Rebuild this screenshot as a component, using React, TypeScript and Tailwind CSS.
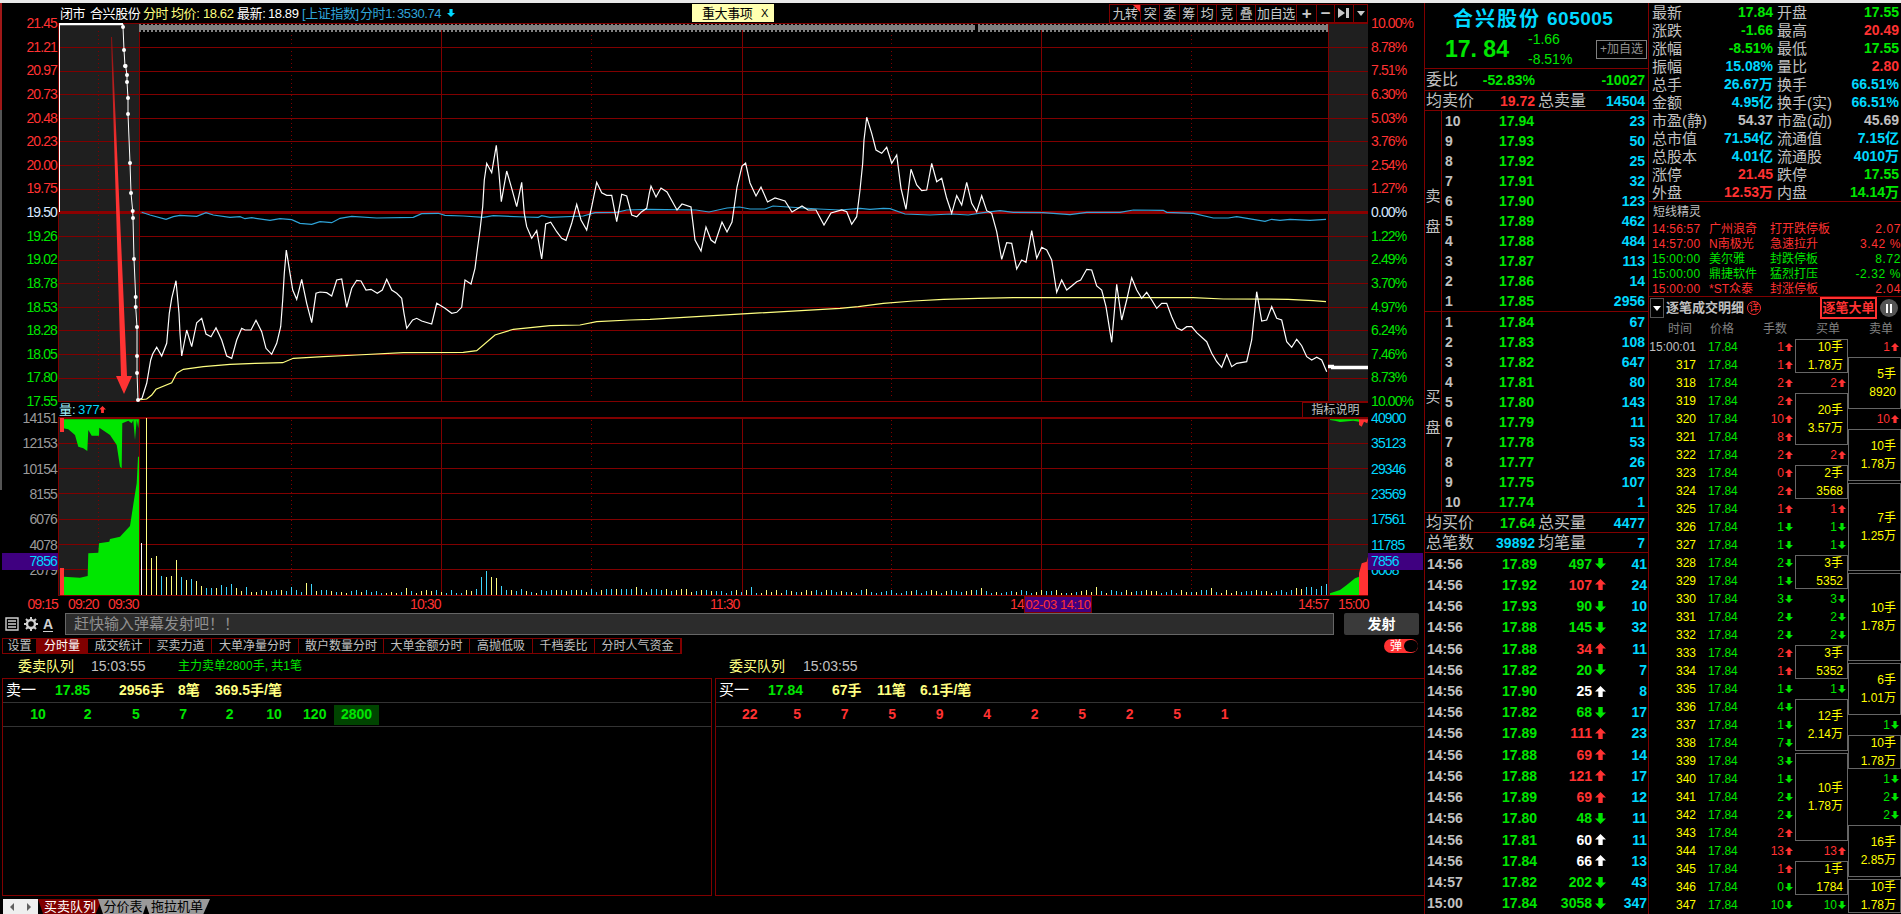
import React from "react";

type Pt = [number, number];
const z11 = (p: Pt[]): Pt[] => p.map(([x, y]) => [130 + x / 3, 100 + y / 3]);
const z12 = (p: Pt[]): Pt[] => p.map(([x, y]) => [840 + x / 3, 100 + y / 3]);
const z6 = (p: Pt[]): Pt[] => p.map(([x, y]) => [x / 3, 390 + y / 3]);
const z9 = (p: Pt[]): Pt[] => p.map(([x, y]) => [1240 + x / 3, 380 + y / 3]);
const str = (p: Pt[]) => p.map(([x, y]) => `${x.toFixed(1)},${y.toFixed(1)}`).join(" ");

const preDots: Pt[] = [
  [123, 27], [124, 50], [125, 66], [125.6, 66], [127, 75], [127, 82], [128, 98], [128, 114], [130, 163], [131, 193],
  [132.7, 211], [133, 218], [134, 259], [135.7, 297], [135.7, 307], [137, 327], [137, 356], [137, 373], [138, 400],
];

const whiteLine: Pt[] = [
  ...z11([
    [24, 900], [36, 895], [50, 850], [62, 780], [68, 762], [80, 742], [95, 768], [110, 730], [118, 640], [125, 595], [138, 542], [147, 640],
    [150, 700], [155, 768], [170, 690], [185, 740], [200, 668], [215, 655], [228, 702], [243, 710], [258, 683], [275, 720], [290, 768],
    [305, 775], [320, 720], [335, 685], [345, 690], [363, 690], [378, 661], [395, 695], [408, 745], [425, 763], [440, 730], [452, 680],
    [458, 600], [463, 520], [469, 450], [480, 520], [488, 570], [500, 598], [515, 538], [530, 610], [545, 668], [558, 580], [570, 576],
    [590, 578], [605, 588], [620, 540], [635, 537], [650, 622], [665, 565], [680, 541], [693, 543], [708, 570], [723, 568], [742, 580],
    [757, 570], [770, 538], [785, 570], [800, 580], [815, 595], [822, 640], [830, 685], [848, 660], [860, 655], [875, 663], [905, 672],
    [920, 610], [945, 625], [965, 640], [980, 637], [995, 622], [1005, 540], [1023, 552], [1035, 505], [1042, 450], [1050, 390], [1058, 320],
    [1063, 240], [1070, 190], [1085, 218], [1099, 136], [1107, 220], [1114, 305], [1130, 213], [1145, 265], [1160, 320], [1175, 247],
    [1183, 340], [1190, 380], [1205, 415], [1220, 392], [1235, 477], [1247, 372], [1262, 367], [1280, 395], [1295, 415], [1308, 421],
    [1325, 370], [1340, 313], [1353, 360], [1370, 390], [1385, 320], [1400, 247], [1415, 278], [1430, 286], [1445, 286], [1460, 365],
    [1475, 283], [1490, 288], [1505, 345], [1520, 350], [1535, 335], [1550, 325], [1558, 280],
  ]),
  [651, 186], [656, 197], [661, 188], [667, 192], [677, 210], [682, 204], [691, 207], [695, 240], [701, 251], [706, 227], [711, 240], [715, 243],
  [722, 222], [727, 232], [732, 222], [737, 187], [742, 166], [745.6, 163], [750, 183], [756, 196], [761, 187], [767.5, 202], [775, 198],
  [785, 201], [792, 212], [802, 206], [808, 210], [816, 210], [824, 225], [831, 213],
  ...z12([
    [5, 330], [20, 335], [35, 373], [50, 350], [60, 270], [68, 190], [72, 120], [80, 52], [95, 100], [108, 150], [125, 160], [140, 142],
    [155, 190], [170, 165], [183, 265], [198, 328], [213, 208], [230, 255], [245, 272], [260, 270], [275, 190], [290, 245], [305, 235],
    [320, 295], [335, 340], [350, 287], [365, 315], [380, 247], [395, 310], [410, 335], [425, 287], [440, 332], [455, 340], [470, 395],
    [485, 478], [500, 428], [515, 430], [530, 507], [545, 480], [558, 487], [575, 392], [590, 475], [605, 442], [620, 450], [635, 480],
    [650, 577], [665, 540], [680, 570], [695, 558], [710, 545], [722, 540], [740, 508], [755, 510], [770, 558], [785, 570], [798, 620],
    [815, 727], [830, 553], [845, 660], [860, 600], [875, 533], [890, 570], [905, 595], [920, 577], [935, 600], [950, 625], [965, 610],
    [980, 610], [995, 650], [1010, 683], [1025, 691], [1040, 680], [1055, 680], [1070, 698], [1100, 725], [1115, 760], [1130, 785],
    [1145, 802], [1160, 763], [1175, 800], [1190, 790], [1220, 785], [1235, 720], [1250, 575], [1265, 663], [1280, 660], [1295, 620],
    [1310, 655], [1325, 660], [1340, 725], [1355, 742], [1370, 718], [1385, 737], [1400, 770], [1415, 780], [1430, 772], [1445, 780], [1460, 815],
  ]),
];

const avgLine: Pt[] = [
  ...z11([
    [24, 900], [50, 897], [65, 885], [78, 868], [125, 848], [140, 820], [160, 808], [220, 800], [300, 793], [375, 790], [458, 788], [490, 775],
    [580, 770], [680, 765], [820, 758], [1000, 757], [1040, 752], [1095, 705], [1150, 688], [1260, 677], [1350, 675], [1400, 665], [1500, 660], [1560, 658],
  ]),
  ...z12([
    [0, 625], [55, 620], [130, 610], [220, 603], [310, 598], [415, 595], [520, 593], [1060, 593], [1150, 597], [1345, 598], [1420, 602], [1458, 605],
  ]),
];

const indexLine: Pt[] = [
  ...z11([
    [35, 337], [60, 345], [108, 358], [130, 350], [150, 346], [200, 349], [228, 338], [250, 345], [300, 352], [330, 350], [345, 356], [365, 353],
    [420, 361], [450, 356], [485, 359], [510, 370], [545, 373], [570, 365], [605, 368], [630, 355], [665, 349], [740, 354], [850, 352], [875, 341],
    [925, 340], [945, 346], [1000, 348], [1060, 352], [1090, 347], [1185, 351], [1225, 352], [1235, 347], [1260, 352], [1360, 348], [1395, 338],
    [1460, 337], [1490, 330], [1560, 328],
  ]),
  [696, 210], [709, 212], [727, 208], [739.5, 207], [750, 209], [765, 209], [773, 206], [788, 207], [818.6, 209],
  ...z12([
    [0, 330], [60, 325], [90, 328], [130, 325], [150, 326], [195, 342], [270, 345], [335, 342], [385, 345], [430, 338], [480, 332], [520, 337],
    [610, 338], [690, 344], [740, 337], [840, 337], [880, 330], [970, 331], [980, 337], [1060, 340], [1120, 354], [1165, 354], [1190, 350],
    [1275, 364], [1295, 358], [1320, 361], [1350, 358], [1410, 361], [1458, 358],
  ]),
];

const priceGrid = Array.from({ length: 17 }, (_, i) => Math.round(23.3 + 23.63 * i) + 0.5);
const volGrid = [418.5, 443.5, 468.5, 493.5, 519.5, 544.5, 569.5, 595.5];
const solidV = [139.5, 441.5, 742.5, 1041.5];
const dottedV = [98.5, 291.5, 591.5, 891.5, 1191.5];

const firstBars: [number, string][] = [
  [52, "w"], [177, "y"], [37, "y"], [39, "y"], [19, "c"], [18, "y"], [19, "y"], [35, "y"], [18, "c"], [15, "y"], [16, "c"], [14, "y"], [9, "y"],
  [7, "c"], [7, "c"], [7, "y"], [10, "c"], [8, "c"], [11, "c"], [7, "y"], [4, "y"], [8, "c"], [3, "y"], [3, "y"], [5, "c"],
];
const spikes: Record<number, number> = { 33: 12, 34: 11, 65: 5, 67: 6, 68: 18, 69: 24, 70: 18, 71: 17, 72: 9 };
const bars = Array.from({ length: 238 }, (_, i) => {
  if (i < firstBars.length) return { h: firstBars[i][0], k: firstBars[i][1] };
  const r = Math.abs(Math.sin(i * 12.9898) * 43758.5453) % 1;
  const r2 = Math.abs(Math.sin(i * 78.233) * 12543.123) % 1;
  let h = 2 + r * 3.5;
  if (i > 85 && i < 110) h += 1;
  if (i > 230) h = 4 + r * 6;
  if (i % 23 === 7) h += 3;
  return { h: spikes[i] ?? h, k: r2 > 0.45 ? "c" : "y" };
});
const barColor: Record<string, string> = { w: "#ffffff", y: "#ffff80", c: "#40d8ff" };

const red = "text-[#ff3232]";
const green = "text-[#00e600]";
const cyan = "text-[#00d8ff]";
const gray = "text-[#c0c0c0]";
const yellow = "text-[#ffff00]";

const priceLabels: [string, string][] = [
  ["21.45", red], ["21.21", red], ["20.97", red], ["20.73", red], ["20.48", red], ["20.23", red], ["20.00", red], ["19.75", red], ["19.50", "text-[#d8e8ff]"],
  ["19.26", green], ["19.02", green], ["18.78", green], ["18.53", green], ["18.28", green], ["18.05", green], ["17.80", green], ["17.55", green],
];
const pctLabels: [string, string][] = [
  ["10.00%", red], ["8.78%", red], ["7.51%", red], ["6.30%", red], ["5.03%", red], ["3.76%", red], ["2.54%", red], ["1.27%", red], ["0.00%", "text-[#d8e8ff]"],
  ["1.22%", green], ["2.49%", green], ["3.70%", green], ["4.97%", green], ["6.24%", green], ["7.46%", green], ["8.73%", green], ["10.00%", green],
];

const tools = [
  { t: "九转", w: "w-[31px]", flag: true },
  { t: "突", w: "w-[19px]" },
  { t: "委", w: "w-[20px]" },
  { t: "筹", w: "w-[18px]" },
  { t: "均", w: "w-[19px]" },
  { t: "竞", w: "w-[20px]" },
  { t: "叠", w: "w-[19px]" },
  { t: "加自选", w: "w-[41px]" },
];

const subTabs = [
  { t: "设置", w: "w-[34px]" },
  { t: "分时量", w: "w-[51px]", on: true },
  { t: "成交统计", w: "w-[62px]" },
  { t: "买卖力道", w: "w-[62px]" },
  { t: "大单净量分时", w: "w-[87px]" },
  { t: "散户数量分时", w: "w-[85px]" },
  { t: "大单金额分时", w: "w-[86px]" },
  { t: "高抛低吸", w: "w-[63px]" },
  { t: "千档委比", w: "w-[62px]" },
  { t: "分时人气资金", w: "w-[86px]" },
];

const sellBook = [
  ["10", "17.94", "23"], ["9", "17.93", "50"], ["8", "17.92", "25"], ["7", "17.91", "32"], ["6", "17.90", "123"],
  ["5", "17.89", "462"], ["4", "17.88", "484"], ["3", "17.87", "113"], ["2", "17.86", "14"], ["1", "17.85", "2956"],
];
const buyBook = [
  ["1", "17.84", "67"], ["2", "17.83", "108"], ["3", "17.82", "647"], ["4", "17.81", "80"], ["5", "17.80", "143"],
  ["6", "17.79", "11"], ["7", "17.78", "53"], ["8", "17.77", "26"], ["9", "17.75", "107"], ["10", "17.74", "1"],
];

const ticks: [string, string, string, string, string][] = [
  ["14:56", "17.89", "497", "d", "41"], ["14:56", "17.92", "107", "u", "24"], ["14:56", "17.93", "90", "d", "10"], ["14:56", "17.88", "145", "d", "32"],
  ["14:56", "17.88", "34", "u", "11"], ["14:56", "17.82", "20", "d", "7"], ["14:56", "17.90", "25", "w", "8"], ["14:56", "17.82", "68", "d", "17"],
  ["14:56", "17.89", "111", "u", "23"], ["14:56", "17.88", "69", "u", "14"], ["14:56", "17.88", "121", "u", "17"], ["14:56", "17.89", "69", "u", "12"],
  ["14:56", "17.80", "48", "d", "11"], ["14:56", "17.81", "60", "w", "11"], ["14:56", "17.84", "66", "w", "13"], ["14:57", "17.82", "202", "d", "43"],
  ["15:00", "17.84", "3058", "d", "347"],
];

const quotes: [string, string, string, string, string, string][] = [
  ["最新", "17.84", green, "开盘", "17.55", green],
  ["涨跌", "-1.66", green, "最高", "20.49", red],
  ["涨幅", "-8.51%", green, "最低", "17.55", green],
  ["振幅", "15.08%", cyan, "量比", "2.80", red],
  ["总手", "26.67万", cyan, "换手", "66.51%", cyan],
  ["金额", "4.95亿", cyan, "换手(实)", "66.51%", cyan],
  ["市盈(静)", "54.37", gray, "市盈(动)", "45.69", gray],
  ["总市值", "71.54亿", cyan, "流通值", "7.15亿", cyan],
  ["总股本", "4.01亿", cyan, "流通股", "4010万", cyan],
  ["涨停", "21.45", red, "跌停", "17.55", green],
  ["外盘", "12.53万", red, "内盘", "14.14万", green],
];

const alerts: [string, string, string, string, string][] = [
  ["14:56:57", "广州浪奇", "打开跌停板", "2.07", red],
  ["14:57:00", "N南极光", "急速拉升", "3.42 %", red],
  ["15:00:00", "美尔雅", "封跌停板", "8.72", green],
  ["15:00:00", "鼎捷软件", "猛烈打压", "-2.32 %", green],
  ["15:00:00", "*ST众泰", "封涨停板", "2.04", red],
];

const hands: [number, string][] = [
  [1, "u"], [1, "u"], [2, "u"], [2, "u"], [10, "u"], [8, "u"], [2, "u"], [0, "u"], [2, "u"], [1, "u"], [1, "d"], [1, "d"], [2, "d"], [1, "d"], [3, "d"], [2, "d"],
  [2, "d"], [2, "u"], [1, "u"], [1, "d"], [4, "d"], [1, "d"], [7, "d"], [3, "d"], [1, "d"], [2, "d"], [2, "d"], [2, "u"], [13, "u"], [1, "u"], [0, "d"], [10, "d"],
];

type Block = { n: number; a?: string; b?: string; v?: number; d?: string };
const buyBlocks: Block[] = [
  { n: 2, a: "10手", b: "1.78万" }, { n: 1, v: 2, d: "u" }, { n: 3, a: "20手", b: "3.57万" }, { n: 1, v: 2, d: "u" }, { n: 2, a: "2手", b: "3568" },
  { n: 1, v: 1, d: "u" }, { n: 1, v: 1, d: "d" }, { n: 1, v: 1, d: "d" }, { n: 2, a: "3手", b: "5352" }, { n: 1, v: 3, d: "d" }, { n: 1, v: 2, d: "d" },
  { n: 1, v: 2, d: "d" }, { n: 2, a: "3手", b: "5352" }, { n: 1, v: 1, d: "d" }, { n: 3, a: "12手", b: "2.14万" }, { n: 5, a: "10手", b: "1.78万" },
  { n: 1, v: 13, d: "u" }, { n: 2, a: "1手", b: "1784" }, { n: 1, v: 10, d: "d" },
];
const sellBlocks: Block[] = [
  { n: 1, v: 1, d: "u" }, { n: 3, a: "5手", b: "8920" }, { n: 1, v: 10, d: "u" }, { n: 3, a: "10手", b: "1.78万" }, { n: 5, a: "7手", b: "1.25万" },
  { n: 5, a: "10手", b: "1.78万" }, { n: 3, a: "6手", b: "1.01万" }, { n: 1, v: 1, d: "d" }, { n: 2, a: "10手", b: "1.78万" }, { n: 1, v: 1, d: "d" },
  { n: 1, v: 2, d: "d" }, { n: 1, v: 2, d: "d" }, { n: 3, a: "16手", b: "2.85万" }, { n: 2, a: "10手", b: "1.78万" },
];

const sellCellW = ["w-[50px]", "w-[49.5px]", "w-[47px]", "w-[47.5px]", "w-[45.5px]", "w-[43px]", "w-[38.5px]", "w-[45px]"];

const Arrow = ({ d, className }: { d: string; className: string }) => (
  <svg viewBox="0 0 10 10" className={className}>
    <polygon className="fill-current" points={d === "d" ? "3,0 7,0 7,5 10,5 5,10 0,5 3,5" : "5,0 10,5 7,5 7,10 3,10 3,5 0,5"} />
  </svg>
);

const handColor = (d: string) => (d === "u" ? red : green);

const BlockCol = ({ blocks }: { blocks: Block[] }) => (
  <div className="flex w-[53px] flex-col">
    {blocks.map((b, i) =>
      b.a ? (
        <div key={i} className="py-[1px]" style={{ height: b.n * 18 }}>
          <div className={`flex h-full flex-col items-end justify-center border border-[#666666] pr-[4px] text-[12px] leading-[18px] ${yellow}`}>
            <span>{b.a}</span>
            <span>{b.b}</span>
          </div>
        </div>
      ) : (
        <div key={i} className={`flex h-[18px] items-center justify-end pr-[2px] text-[12px] ${handColor(b.d as string)}`}>
          <span>{b.v}</span>
          <Arrow d={b.d as string} className="ml-[1px] h-[8px] w-[8px]" />
        </div>
      ),
    )}
  </div>
);

const PriceChart = () => (
  <svg viewBox="58 23 1310 379" className="block h-[379px] w-[1310px]">
    <rect x="59" y="23" width="80" height="378" fill="#1f1f1f" />
    <rect x="1328" y="23" width="40" height="378" fill="#1f1f1f" />
    {priceGrid.map((y) => (
      <line key={y} x1="58" x2="1368" y1={y} y2={y} stroke="#800000" shapeRendering="crispEdges" />
    ))}
    <line x1="58" x2="1368" y1="212.5" y2="212.5" stroke="#8b0000" strokeWidth="3" shapeRendering="crispEdges" />
    {solidV.map((x) => (
      <line key={x} x1={x} x2={x} y1="23" y2="401" stroke="#800000" shapeRendering="crispEdges" />
    ))}
    <line x1="1328.5" x2="1328.5" y1="23" y2="401" stroke="#800000" shapeRendering="crispEdges" />
    <line x1="58.5" x2="58.5" y1="23" y2="401" stroke="#800000" shapeRendering="crispEdges" />
    {dottedV.map((x) => (
      <line key={x} x1={x} x2={x} y1="31" y2="399" stroke="#800000" strokeDasharray="1 3" shapeRendering="crispEdges" />
    ))}
    <g shapeRendering="crispEdges">
      <line x1="139" x2="975" y1="27.5" y2="27.5" stroke="#808080" strokeWidth="5" />
      <line x1="139" x2="975" y1="27.5" y2="27.5" stroke="#808080" strokeWidth="8" strokeDasharray="2 2" />
      <line x1="978" x2="1328" y1="27.5" y2="27.5" stroke="#808080" strokeWidth="5" />
      <line x1="978" x2="1328" y1="27.5" y2="27.5" stroke="#808080" strokeWidth="8" strokeDasharray="2 2" />
    </g>
    <polyline points={str(indexLine)} fill="none" stroke="#2fa4d8" strokeWidth="1.2" />
    <polyline points={str(avgLine)} fill="none" stroke="#ffff80" strokeWidth="1.2" />
    <polyline points={str(whiteLine)} fill="none" stroke="#ffffff" strokeWidth="1.2" />
    <polyline points={`59.5,212 59.5,24 123,24 ${str(preDots)}`} fill="none" stroke="#ffffff" strokeWidth="1" />
    <line x1="59" x2="123" y1="24" y2="24" stroke="#ffffff" strokeWidth="2.5" />
    {preDots.map(([x, y], i) => (
      <circle key={i} cx={x} cy={y} r="2" fill="#ffffff" />
    ))}
    <line x1="1331" x2="1368" y1="367.5" y2="367.5" stroke="#ffffff" strokeWidth="3.5" />
    <line x1="1328" x2="1334" y1="366.5" y2="366.5" stroke="#ffffff" strokeWidth="3.5" />
    <defs>
      <linearGradient id="drop" x1="0" x2="0" y1="0" y2="1">
        <stop offset="0" stopColor="#8a1010" />
        <stop offset="0.35" stopColor="#ff3333" />
        <stop offset="1" stopColor="#ff3333" />
      </linearGradient>
    </defs>
    <polygon points="111,37 112,37 127,376 132,376 124,394 116,376 121,376" fill="url(#drop)" />
  </svg>
);

const VolumeChart = () => (
  <svg viewBox="58 418 1310 178" className="block h-[178px] w-[1310px]">
    <rect x="59" y="418" width="80" height="178" fill="#1f1f1f" />
    <rect x="1328" y="418" width="40" height="178" fill="#1f1f1f" />
    {volGrid.map((y) => (
      <line key={y} x1="58" x2="1368" y1={y} y2={y} stroke="#800000" shapeRendering="crispEdges" />
    ))}
    {[...solidV, 58.5, 1328.5].map((x) => (
      <line key={x} x1={x} x2={x} y1="418" y2="596" stroke="#800000" shapeRendering="crispEdges" />
    ))}
    {dottedV.map((x) => (
      <line key={x} x1={x} x2={x} y1="420" y2="595" stroke="#800000" strokeDasharray="1 3" shapeRendering="crispEdges" />
    ))}
    <polygon
      fill="#00e600"
      points={str(z6([[190, 88], [417, 88], [415, 115], [410, 90], [405, 150], [400, 90], [395, 100], [385, 92], [367, 100], [365, 235], [360, 230], [350, 165], [330, 135], [298, 113], [297, 137], [275, 137], [265, 120], [262, 183], [250, 175], [235, 170], [225, 135], [205, 118], [190, 115]]))}
    />
    <polygon
      fill="#00e600"
      points={str(z6([[190, 560], [240, 563], [263, 558], [265, 490], [295, 488], [297, 460], [328, 455], [330, 447], [360, 440], [390, 408], [395, 375], [402, 330], [410, 280], [414, 200], [417, 200], [417, 615], [190, 615]]))}
    />
    <rect x="60" y="418" width="4" height="14" fill="#ff3232" />
    <rect x="60" y="568" width="4" height="27" fill="#ff3232" />
    {bars.map((b, i) => (
      <rect key={i} x={141 + 5 * i} y={595 - b.h} width="1" height={b.h} fill={barColor[b.k]} shapeRendering="crispEdges" />
    ))}
    <polygon fill="#00e600" points={str(z9([[270, 118], [357, 118], [357, 125], [340, 122], [300, 126], [285, 122], [270, 120]]))} />
    <polygon fill="#ff3232" points={str(z9([[357, 118], [385, 118], [382, 130], [372, 125], [365, 140], [357, 135]]))} />
    <polygon fill="#00e600" points={str(z9([[270, 645], [270, 640], [300, 630], [320, 615], [345, 595], [357, 590], [357, 645]]))} />
    <polygon fill="#ff3232" points={str(z9([[357, 580], [365, 550], [380, 545], [383, 530], [385, 645], [357, 645]]))} />
  </svg>
);

const Queue = ({ head, price, summary, nums, numCls, hi, widths }: { head: string; price: string; summary: React.ReactNode; nums: string[]; numCls: string; hi?: boolean; widths?: string[] }) => (
  <div className="flex h-full flex-col">
    <div className="h-[24px] border-b border-[#333333] text-[14px] text-[#ffff80]">
      <div className="flex h-full items-center font-bold">
        <span className="w-[52px] pl-[3px] text-[15px] font-normal text-white">{head}</span>
        <span className={`w-[64px] ${green}`}>{price}</span>
        {summary}
      </div>
    </div>
    <div className="flex h-[24px] items-center border-b border-[#333333] pl-[10px] text-[14px] font-bold">
      {nums.map((n, i) => (
        <span
          key={i}
          className={`flex justify-center ${widths ? widths[i] : "w-[47.5px]"} ${numCls} ${hi && i === nums.length - 1 ? "h-[20px] items-center bg-[#004400]" : ""}`}
        >
          {n}
        </span>
      ))}
    </div>
  </div>
);

export default function App() {
  return (
    <div className="flex h-[914px] w-[1901px] flex-col overflow-hidden bg-black [font-family:'Liberation_Sans','Noto_Sans_CJK_SC',sans-serif]">
      <div className="h-[3px] bg-[#e8e8e8]" />
      <div className="flex h-[911px]">
        {/* left: chart and queues */}
        <div className="flex w-[1424px] flex-col">
          <div className="flex h-[609px]">
            <div className="flex w-[58px]">
              <div className="flex w-[2px] flex-col">
                <div className="h-[107px] bg-[#a01818]" />
                <div className="h-[380px] bg-[#555555]" />
              </div>
              <div className="flex w-[56px] flex-col pt-[12px] text-right text-[14px] leading-[16px] tracking-[-0.9px]">
                <div className="flex h-[394px] flex-col justify-between pr-[1px]">
                  {priceLabels.map(([t, c]) => (
                    <span key={t} className={c}>{t}</span>
                  ))}
                </div>
                <div className="relative mt-[1px] flex h-[168px] flex-col justify-between pr-[1px] text-[#9a9a9a]">
                  {["14151", "12153", "10154", "8155", "6076", "4078", "2079"].map((t) => (
                    <span key={t}>{t}</span>
                  ))}
                  <div className={`absolute top-[143px] right-0 left-0 h-[17px] bg-[#3f0080] pr-[1px] ${cyan}`}>7856</div>
                </div>
                <div className={`mt-[18px] ${red}`}>09:15</div>
              </div>
            </div>
            <div className="flex w-[1310px] flex-col">
              <div className="flex h-[20px] items-center text-[13px] leading-none tracking-[-0.4px] text-[#ffff80]">
                <div className="flex w-[634px] items-center whitespace-nowrap pl-[2px]">
                  <span className="w-[30px] text-white">闭市</span>
                  <span className="w-[53px] text-white">合兴股份</span>
                  <span className="w-[28px]">分时</span>
                  <span className="w-[32px]">均价:</span>
                  <span className="w-[34px]">18.62</span>
                  <span className="w-[31px] text-white">最新:</span>
                  <span className="w-[34px] text-white">18.89</span>
                  <span className="w-[58px] text-[#2fa4d8]">[上证指数]</span>
                  <span className="w-[37px] text-[#2fa4d8]">分时1:</span>
                  <span className="w-[50px] text-[#2fa4d8]">3530.74</span>
                  <Arrow d="d" className={`h-[12px] w-[8px] ${cyan}`} />
                </div>
                <div className="flex h-[18px] w-[82px] items-center justify-between bg-[#ffffb0] pr-[6px] pl-[10px] text-black">
                  <span>重大事项</span>
                  <span className="text-[11px]">X</span>
                </div>
                <div className="w-[335px]" />
                <div className="flex h-[19px] w-[259px] border border-[#800000] text-[#c8c8c8]">
                  {tools.map((b) => (
                    <div key={b.t} className={`relative flex items-center justify-center border-r border-[#800000] ${b.w}`}>
                      {b.t}
                      {b.flag && <span className="absolute top-0 right-0 border-t-[7px] border-l-[7px] border-t-[#ff3232] border-l-transparent" />}
                    </div>
                  ))}
                  <div className="flex w-[20px] items-center justify-center border-r border-[#800000] text-[17px] font-bold">+</div>
                  <div className="flex w-[18px] items-center justify-center border-r border-[#800000] text-[17px] font-bold">−</div>
                  <div className="flex w-[19px] items-center justify-center border-r border-[#800000]">
                    <svg viewBox="0 0 12 12" className="h-[12px] w-[12px]"><path d="M0 1 L7 6 L0 11 Z M8 1 H11 V11 H8 Z" fill="#c8c8c8" /></svg>
                  </div>
                  <div className="flex flex-1 items-center justify-center">
                    <span className="border-x-[4px] border-t-[5px] border-x-transparent border-t-[#c8c8c8]" />
                  </div>
                </div>
              </div>
              <PriceChart />
              <div className="flex h-[16px] items-center justify-between border-b border-[#800000] text-[13px]">
                <div className={`flex items-center pl-[1px] ${cyan}`}>
                  <span className="w-[18px] text-[#a0f0ff]">量:</span>
                  <span className="ml-[1px] w-[21px]">377</span>
                  <Arrow d="u" className={`h-[13px] w-[7px] ${red}`} />
                </div>
                <div className="flex h-[15px] w-[66px] items-center justify-center border-t border-l border-[#800000] text-[12px] text-[#c0c0c0]">指标说明</div>
              </div>
              <VolumeChart />
              <div className={`relative flex h-[16px] items-center text-[14px] leading-none tracking-[-0.9px] whitespace-nowrap ${red}`}>
                <span className="ml-[10px] w-[30px]">09:20</span>
                <span className="ml-[10px] w-[30px]">09:30</span>
                <span className="ml-[272px] w-[30px]">10:30</span>
                <span className="ml-[270px] w-[30px]">11:30</span>
                <span className="ml-[270px] w-[14px]">14</span>
                <span className="ml-[274px] w-[30px]">14:57</span>
                <span className="ml-[10px] w-[30px]">15:00</span>
                <div className="absolute top-0 left-[966px] flex h-[17px] w-[68px] items-center justify-center border border-[#800000] bg-[#3f0080] text-[13px] tracking-[-0.4px]">02-03 14:10</div>
              </div>
            </div>
            <div className="flex w-[56px] flex-col pt-[12px] pl-[3px] text-[14px] leading-[16px] tracking-[-0.9px]">
              <div className="flex h-[394px] flex-col justify-between">
                {pctLabels.map(([t, c], i) => (
                  <span key={i} className={c}>{t}</span>
                ))}
              </div>
              <div className={`relative mt-[1px] flex h-[168px] flex-col justify-between ${cyan}`}>
                {["40900", "35123", "29346", "23569", "17561", "11785", "6008"].map((t) => (
                  <span key={t}>{t}</span>
                ))}
                <div className="absolute top-[143px] right-[1px] left-[-3px] h-[17px] bg-[#3f0080] pl-[3px]">7856</div>
              </div>
            </div>
          </div>

          <div className="mt-[1px] flex h-[22px] items-center">
            <div className="flex w-[65px] items-center gap-[5px] pl-[5px] text-white">
              <svg viewBox="0 0 14 14" className="h-[14px] w-[14px]"><path d="M1 1h12v12H1z M3 4h8M3 7h8M3 10h8" fill="none" stroke="#d0d0d0" strokeWidth="1.4" /></svg>
              <svg viewBox="0 0 14 14" className="h-[14px] w-[14px]">
                <circle cx="7" cy="7" r="4" fill="none" stroke="#d0d0d0" strokeWidth="2.4" />
                <path d="M7 0v3M7 11v3M0 7h3M11 7h3M2 2l2 2M10 10l2 2M12 2l-2 2M4 10l-2 2" stroke="#d0d0d0" strokeWidth="2" />
              </svg>
              <span className="border-b border-[#d0d0d0] text-[14px] leading-[14px] font-bold text-[#d0d0d0]">A</span>
            </div>
            <div className="flex h-[22px] w-[1269px] items-center border border-[#666666] bg-[#2c2c2c] pl-[8px] text-[15px] text-[#909090]">赶快输入弹幕发射吧！！</div>
            <div className="ml-[10px] flex h-[22px] w-[75px] items-center justify-center rounded-[2px] bg-[#3a3a3a] text-[14px] font-bold text-white">发射</div>
          </div>

          <div className="mt-[3px] flex h-[16px] items-center justify-between pr-[6px] pl-[2px]">
            <div className="flex h-[16px] border border-[#800000] text-[12px] leading-none text-[#c0c0c0]">
              {subTabs.map((s) => (
                <div key={s.t} className={`flex items-center justify-center border-r border-[#800000] ${s.w} ${s.on ? "bg-[#800000] text-white" : ""}`}>
                  {s.t}
                </div>
              ))}
            </div>
            <div className="flex h-[14px] w-[34px] items-center justify-between rounded-full bg-[#ff3232] pl-[6px] text-[12px] leading-none text-white">
              弹
              <span className="h-[12px] w-[14px] rounded-full bg-black" />
            </div>
          </div>

          <div className="flex h-[24px] items-center text-[#ffff80]">
            <span className="ml-[18px] w-[73px] text-[14px]">委卖队列</span>
            <span className="w-[87px] text-[14px] text-[#c0c0c0]">15:03:55</span>
            <span className={`w-[551px] text-[12px] ${green}`}>主力卖单2800手, 共1笔</span>
            <span className="w-[74px] text-[14px]">委买队列</span>
            <span className="text-[14px] text-[#c0c0c0]">15:03:55</span>
          </div>

          <div className="ml-[2px] flex h-[218px] gap-[3px]">
            <div className="w-[710px] border border-[#800000]">
              <Queue
                head="卖一"
                price="17.85"
                hi
                widths={sellCellW}
                numCls={green}
                nums={["10", "2", "5", "7", "2", "10", "120", "2800"]}
                summary={
                  <>
                    <span className="w-[59px]">2956手</span>
                    <span className="w-[37px]">8笔</span>
                    <span>369.5手/笔</span>
                  </>
                }
              />
            </div>
            <div className="w-[709px] border border-r-0 border-[#800000]">
              <Queue
                head="买一"
                price="17.84"
                numCls={red}
                nums={["22", "5", "7", "5", "9", "4", "2", "5", "2", "5", "1"]}
                summary={
                  <>
                    <span className="w-[45px]">67手</span>
                    <span className="w-[43px]">11笔</span>
                    <span>6.1手/笔</span>
                  </>
                }
              />
            </div>
          </div>

          <div className="mt-[3px] ml-[3px] flex h-[15px] items-center text-[13px] leading-none">
            <div className="flex h-full w-[35px] items-center justify-around bg-[#efefef] text-[#606060]">
              <span className="border-y-[4px] border-r-[4px] border-y-transparent border-r-[#606060]" />
              <span className="border-y-[4px] border-l-[4px] border-y-transparent border-l-[#606060]" />
            </div>
            <div className="flex h-full w-[64px] items-center justify-center bg-[#800000] text-white [clip-path:polygon(0_0,100%_0,90%_100%,8%_100%)]">买卖队列</div>
            <div className="-ml-[4px] flex h-full w-[50px] items-center justify-center bg-[#999999] text-black [clip-path:polygon(0_0,100%_0,90%_100%,10%_100%)]">分价表</div>
            <div className="-ml-[4px] flex h-full w-[66px] items-center justify-center bg-[#999999] text-black [clip-path:polygon(0_0,100%_0,90%_100%,8%_100%)]">拖拉机单</div>
          </div>
        </div>

        {/* middle: order book */}
        <div className="flex w-[225px] flex-col border-x border-[#800000] text-[14px] leading-none font-bold">
          <div className="flex h-[66px] flex-col border-b border-[#800000]">
            <div className={`flex h-[27px] items-center pt-[4px] pl-[28px] text-[20px] tracking-[2px] ${cyan}`}>
              合兴股份
              <span className="ml-[6px] text-[19px] tracking-[0.5px]">605005</span>
            </div>
            <div className={`flex flex-1 items-center ${green}`}>
              <span className="w-[103px] pl-[20px] text-[23px]">17. 84</span>
              <div className="flex w-[68px] flex-col gap-[6px] text-[14px] font-normal">
                <span>-1.66</span>
                <span>-8.51%</span>
              </div>
              <div className="flex h-[19px] w-[51px] items-center justify-center border border-[#808080] text-[12px] font-normal text-[#909090]">+加自选</div>
            </div>
          </div>
          <div className="flex h-[22px] items-center border-b border-[#800000] pr-[3px]">
            <span className="w-[56px] pl-[1px] text-[16px] font-normal text-[#c0c0c0]">委比</span>
            <span className={`w-[54px] text-right ${green}`}>-52.83%</span>
            <span className={`flex-1 text-right ${green}`}>-10027</span>
          </div>
          <div className="flex h-[20px] items-center border-b border-[#800000] pr-[3px]">
            <span className="w-[56px] pl-[1px] text-[16px] font-normal text-[#c0c0c0]">均卖价</span>
            <span className={`w-[54px] text-right ${red}`}>19.72</span>
            <span className="ml-[3px] text-[16px] font-normal text-[#c0c0c0]">总卖量</span>
            <span className={`flex-1 text-right ${cyan}`}>14504</span>
          </div>
          {[
            { l: ["卖", "盘"], rows: sellBook },
            { l: ["买", "盘"], rows: buyBook },
          ].map((g) => (
            <div key={g.l[0]} className="flex h-[201px] border-b border-[#800000]">
              <div className="flex w-[17px] flex-col items-center justify-center gap-[16px] border-r border-[#800000] text-[15px] font-normal text-[#c0c0c0]">
                <span>{g.l[0]}</span>
                <span>{g.l[1]}</span>
              </div>
              <div className="flex flex-1 flex-col justify-around pr-[3px] pl-[3px]">
                {g.rows.map(([i, p, q]) => (
                  <div key={i} className="flex h-[20px] items-center">
                    <span className="w-[54px] text-[#c0c0c0]">{i}</span>
                    <span className={green}>{p}</span>
                    <span className={`flex-1 text-right ${cyan}`}>{q}</span>
                  </div>
                ))}
              </div>
            </div>
          ))}
          <div className="flex h-[20px] items-center border-b border-[#800000] pr-[3px]">
            <span className="w-[56px] pl-[1px] text-[16px] font-normal text-[#c0c0c0]">均买价</span>
            <span className={`w-[54px] text-right ${green}`}>17.64</span>
            <span className="ml-[3px] text-[16px] font-normal text-[#c0c0c0]">总买量</span>
            <span className={`flex-1 text-right ${cyan}`}>4477</span>
          </div>
          <div className="flex h-[20px] items-center border-b border-[#800000] pr-[3px]">
            <span className="w-[56px] pl-[1px] text-[16px] font-normal text-[#c0c0c0]">总笔数</span>
            <span className={`w-[54px] text-right ${cyan}`}>39892</span>
            <span className="ml-[3px] text-[16px] font-normal text-[#c0c0c0]">均笔量</span>
            <span className={`flex-1 text-right ${cyan}`}>7</span>
          </div>
          <div className="flex flex-1 flex-col">
            {ticks.map(([t, p, v, d, n], i) => (
              <div key={i} className="flex flex-1 items-center">
                <span className="w-[77px] pl-[2px] text-[#c0c0c0]">{t}</span>
                <span className={`w-[40px] ${green}`}>{p}</span>
                <span className={`w-[50px] text-right ${d === "d" ? green : d === "u" ? red : "text-white"}`}>{v}</span>
                <Arrow d={d === "d" ? "d" : "u"} className={`ml-[3px] h-[11px] w-[11px] ${d === "d" ? green : d === "u" ? red : "text-white"}`} />
                <span className={`flex-1 pr-[1px] text-right ${cyan}`}>{n}</span>
              </div>
            ))}
          </div>
        </div>

        {/* right: quote, alerts, trade detail */}
        <div className="flex w-[252px] flex-col">
          <div className="flex h-[199px] flex-col border-b border-[#800000] text-[14px] leading-none font-bold">
            {quotes.map((q) => (
              <div key={q[0]} className="flex h-[18px] items-center whitespace-nowrap pr-[2px] pl-[3px]">
                <span className="w-[57px] text-[15px] font-normal text-[#c0c0c0]">{q[0]}</span>
                <span className={`w-[64px] text-right ${q[2]}`}>{q[1]}</span>
                <span className="ml-[4px] w-[58px] text-[15px] font-normal text-[#c0c0c0]">{q[3]}</span>
                <span className={`flex-1 text-right ${q[5]}`}>{q[4]}</span>
              </div>
            ))}
          </div>
          <div className="flex h-[95px] flex-col border-b border-[#800000] text-[12px] leading-none whitespace-nowrap">
            <div className="flex h-[19px] items-center pl-[4px] text-[#c0c0c0]">短线精灵</div>
            {alerts.map(([t, n, e, v, c]) => (
              <div key={t + n} className={`flex h-[15px] items-center pl-[3px] ${c}`}>
                <span className="w-[57px] tracking-[0.2px]">{t}</span>
                <span className="w-[61px]">{n}</span>
                <span className="w-[62px]">{e}</span>
                <span className="flex-1 text-right tracking-[0.6px]">{v}</span>
              </div>
            ))}
          </div>
          <div className="flex h-[23px] items-center">
            <div className="ml-[1px] flex h-[20px] w-[14px] items-center justify-center border border-[#555555]">
              <span className="border-x-[4px] border-t-[5px] border-x-transparent border-t-white" />
            </div>
            <span className="ml-[2px] w-[81px] text-[13px] font-bold text-[#c0c0c0]">逐笔成交明细</span>
            <span className="flex h-[14px] w-[14px] items-center justify-center rounded-full border border-[#ff3232] text-[10px] leading-none text-[#ff3232]">详</span>
            <span className="ml-[59px] flex h-[22px] w-[57px] items-center justify-center border-2 border-[#ff3232] text-[13px] font-bold whitespace-nowrap text-[#ff3232]">逐笔大单</span>
            <span className="ml-[3px] flex h-[18px] w-[18px] items-center justify-center gap-[2px] rounded-full bg-[#555555]">
              <span className="h-[9px] w-[2px] bg-white" />
              <span className="h-[9px] w-[2px] bg-white" />
            </span>
          </div>
          <div className="flex h-[20px] items-center text-[12px] text-[#808080]">
            <span className="ml-[19px] w-[42px]">时间</span>
            <span className="w-[53px]">价格</span>
            <span className="w-[53px]">手数</span>
            <span className="w-[53px]">买单</span>
            <span>卖单</span>
          </div>
          <div className="flex text-[12px] leading-none">
            <div className="flex w-[146px] flex-col">
              {hands.map(([n, d], i) => (
                <div key={i} className="flex h-[18px] items-center">
                  <span className={`w-[47px] text-right ${i === 0 ? "text-[#c0c0c0]" : yellow}`}>{i === 0 ? "15:00:01" : 316 + i}</span>
                  <span className={`w-[44px] pl-[12px] tracking-[-0.1px] ${green}`}>17.84</span>
                  <span className={`flex w-[53px] items-center justify-end ${handColor(d)}`}>
                    {n}
                    <Arrow d={d} className="ml-[1px] h-[8px] w-[8px]" />
                  </span>
                </div>
              ))}
            </div>
            <BlockCol blocks={buyBlocks} />
            <BlockCol blocks={sellBlocks} />
          </div>
        </div>
      </div>
    </div>
  );
}
